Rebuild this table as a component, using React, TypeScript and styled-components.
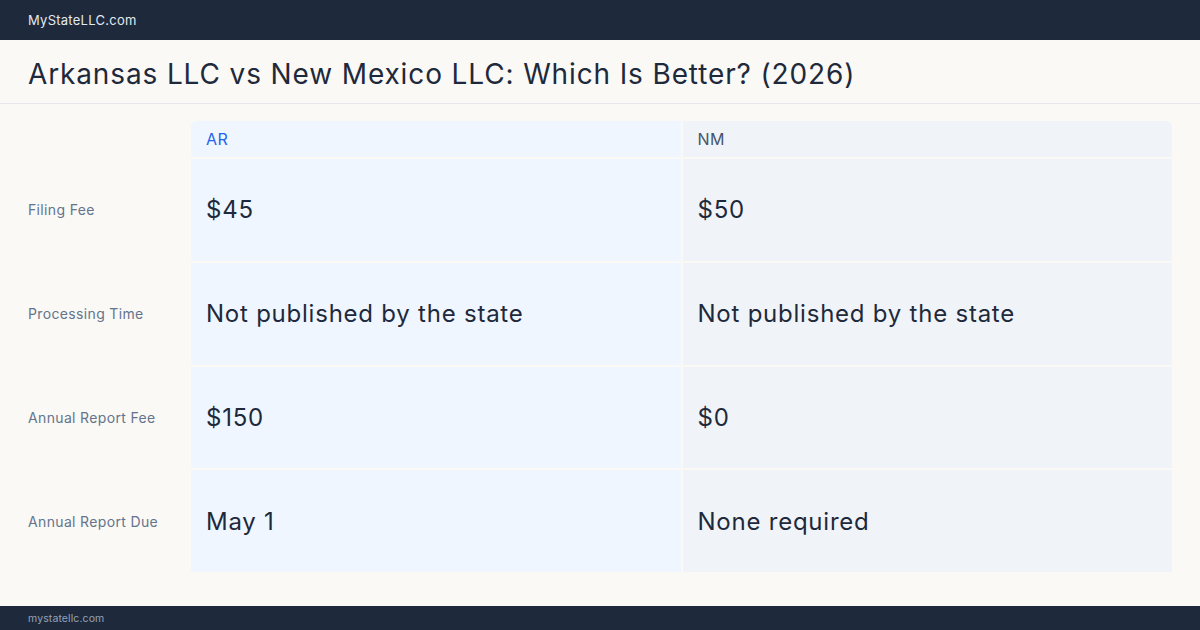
import React from "react";
import styled, { createGlobalStyle } from "styled-components";

const Global = createGlobalStyle`
  html, body { margin: 0; padding: 0; }
  body { background: #faf9f6; font-family: Inter, "Noto Sans", sans-serif; }
  #root { width: 1200px; height: 630px; }
`;

const Page = styled.div`
  width: 1200px;
  height: 630px;
  display: flex;
  flex-direction: column;
  background: #faf9f6;
  color: #1e293b;
  letter-spacing: 0.03em;
`;

const TopBar = styled.header`
  height: 40px;
  flex: none;
  background: #1e293b;
  display: flex;
  align-items: center;
  padding: 0 28px;
  color: #e2e8f0;
  font-size: 13px;
  letter-spacing: 0.02em;
`;

const TitleBar = styled.div`
  height: 64px;
  flex: none;
  box-sizing: border-box;
  display: flex;
  align-items: center;
  padding: 5px 28px 0;
  border-bottom: 1px solid #e5e7eb;
`;

const Title = styled.h1`
  margin: 0;
  font-size: 28px;
  font-weight: 400;
  color: #1e293b;
  letter-spacing: 0.031em;
`;

const Main = styled.main`
  flex: 1;
  padding: 17px 28px 34px;
  display: flex;
`;

const Table = styled.div`
  flex: 1;
  display: grid;
  grid-template-columns: 161px 1fr 1fr;
  grid-template-rows: 36px repeat(4, 1fr);
  column-gap: 2px;
  row-gap: 2px;
`;

const Corner = styled.div``;

const HeadCell = styled.div<{ $accent?: boolean; $first?: boolean }>`
  display: flex;
  align-items: center;
  padding: 0 15px;
  font-size: 16px;
  background: ${(p) => (p.$accent ? "#eff6ff" : "#f0f4f9")};
  color: ${(p) => (p.$accent ? "#2563eb" : "#475569")};
  border-radius: ${(p) => (p.$first ? "6px 0 0 0" : "0 6px 0 0")};
`;

const Label = styled.div`
  display: flex;
  align-items: center;
  font-size: 14px;
  color: #64748b;
  letter-spacing: 0.025em;
`;

const Cell = styled.div<{ $accent?: boolean }>`
  display: flex;
  align-items: center;
  padding: 0 15px;
  font-size: 24px;
  color: #1e293b;
  letter-spacing: 0.032em;
  background: ${(p) => (p.$accent ? "#eff6ff" : "#f0f4f9")};
`;

const Footer = styled.footer`
  height: 24px;
  flex: none;
  background: #1e293b;
  display: flex;
  align-items: center;
  padding: 0 28px;
  color: #94a3b8;
  font-size: 10.5px;
  letter-spacing: 0.01em;
`;

const rows = [
  ["Filing Fee", "$45", "$50"],
  ["Processing Time", "Not published by the state", "Not published by the state"],
  ["Annual Report Fee", "$150", "$0"],
  ["Annual Report Due", "May 1", "None required"],
];

export default function App() {
  return (
    <>
      <Global />
      <Page>
        <TopBar>MyStateLLC.com</TopBar>
        <TitleBar>
          <Title>Arkansas LLC vs New Mexico LLC: Which Is Better? (2026)</Title>
        </TitleBar>
        <Main>
          <Table>
            <Corner />
            <HeadCell $accent $first>AR</HeadCell>
            <HeadCell>NM</HeadCell>
            {rows.map(([l, a, b]) => (
              <React.Fragment key={l}>
                <Label>{l}</Label>
                <Cell $accent>{a}</Cell>
                <Cell>{b}</Cell>
              </React.Fragment>
            ))}
          </Table>
        </Main>
        <Footer>mystatellc.com</Footer>
      </Page>
    </>
  );
}
